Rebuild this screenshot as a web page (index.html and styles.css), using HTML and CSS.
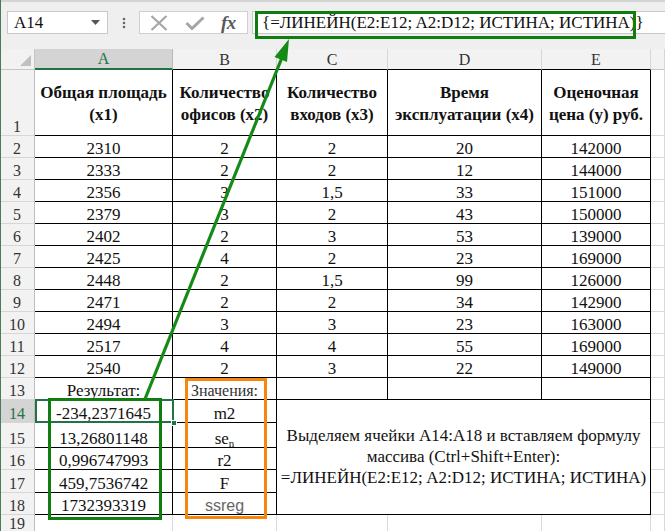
FILE: index.html
```html
<!DOCTYPE html>
<html lang="ru">
<head>
<meta charset="utf-8">
<title>ЛИНЕЙН</title>
<link rel="stylesheet" href="styles.css">
</head>
<body>
<div class="app">
  <div class="fbar">
    <div class="namebox">
      <span class="nb-text">A14</span>
      <svg class="caret" width="9" height="5" viewBox="0 0 9 5"><path d="M0 0h9L4.5 5z" fill="#555"/></svg>
    </div>
    <div class="dots">
      <svg width="4" height="12" viewBox="0 0 4 12"><circle cx="2" cy="2" r="1.3" fill="#666"/><circle cx="2" cy="6" r="1.3" fill="#666"/><circle cx="2" cy="10" r="1.3" fill="#666"/></svg>
    </div>
    <div class="btns">
      <svg class="ic-x" width="18" height="16" viewBox="0 0 18 16"><path d="M1.5 1L16.5 15M16.5 1L1.5 15" stroke="#a6a6a6" stroke-width="2.2" fill="none"/></svg>
      <svg class="ic-ok" width="20" height="14" viewBox="0 0 20 14"><path d="M1.5 7L7 12.5L18.5 1.5" stroke="#a6a6a6" stroke-width="3" fill="none"/></svg>
      <span class="fx">fx</span>
    </div>
    <div class="formula">
      <span class="f-text">{=ЛИНЕЙН(E2:E12; A2:D12; ИСТИНА; ИСТИНА)}</span>
    </div>
  </div>

  <table class="sheet">
    <tr class="hdr">
      <th class="corner w-rh"><span class="tri"></span></th>
      <th class="w-a ch ch-sel">A</th>
      <th class="w-b ch ch-k">B</th>
      <th class="w-c ch ch-k">C</th>
      <th class="w-d ch ch-k">D</th>
      <th class="w-e ch ch-k">E</th>
      <th class="w-f ch"></th>
    </tr>
    <tr class="r-head">
      <th class="rh">1</th>
      <td class="k hd">Общая площадь<br>(x1)</td>
      <td class="k hd">Количество<br>офисов (x2)</td>
      <td class="k hd">Количество<br>входов (x3)</td>
      <td class="k hd">Время<br>эксплуатации (x4)</td>
      <td class="k hd">Оценочная<br>цена (y) руб.</td>
      <td class="g"></td>
    </tr>
    <tr class="r22"><th class="rh">2</th><td class="k">2310</td><td class="k">2</td><td class="k">2</td><td class="k">20</td><td class="k">142000</td><td class="g"></td></tr>
    <tr class="r22"><th class="rh">3</th><td class="k">2333</td><td class="k">2</td><td class="k">2</td><td class="k">12</td><td class="k">144000</td><td class="g"></td></tr>
    <tr class="r22"><th class="rh">4</th><td class="k">2356</td><td class="k">3</td><td class="k">1,5</td><td class="k">33</td><td class="k">151000</td><td class="g"></td></tr>
    <tr class="r22"><th class="rh">5</th><td class="k">2379</td><td class="k">3</td><td class="k">2</td><td class="k">43</td><td class="k">150000</td><td class="g"></td></tr>
    <tr class="r22"><th class="rh">6</th><td class="k">2402</td><td class="k">2</td><td class="k">3</td><td class="k">53</td><td class="k">139000</td><td class="g"></td></tr>
    <tr class="r22"><th class="rh">7</th><td class="k">2425</td><td class="k">4</td><td class="k">2</td><td class="k">23</td><td class="k">169000</td><td class="g"></td></tr>
    <tr class="r22"><th class="rh">8</th><td class="k">2448</td><td class="k">2</td><td class="k">1,5</td><td class="k">99</td><td class="k">126000</td><td class="g"></td></tr>
    <tr class="r22"><th class="rh">9</th><td class="k">2471</td><td class="k">2</td><td class="k">2</td><td class="k">34</td><td class="k">142900</td><td class="g"></td></tr>
    <tr class="r22"><th class="rh">10</th><td class="k">2494</td><td class="k">3</td><td class="k">3</td><td class="k">23</td><td class="k">163000</td><td class="g"></td></tr>
    <tr class="r22"><th class="rh">11</th><td class="k">2517</td><td class="k">4</td><td class="k">4</td><td class="k">55</td><td class="k">169000</td><td class="g"></td></tr>
    <tr class="r22"><th class="rh">12</th><td class="k">2540</td><td class="k">2</td><td class="k">3</td><td class="k">22</td><td class="k">149000</td><td class="g"></td></tr>
    <tr class="r22"><th class="rh">13</th><td class="k">Результат:</td><td class="k lbl">Значения:</td><td class="k"></td><td class="k"></td><td class="k"></td><td class="g"></td></tr>
    <tr class="r23">
      <th class="rh rh-sel">14</th><td class="k">-234,2371645</td><td class="k">m2</td>
      <td class="k note" colspan="3" rowspan="5">Выделяем ячейки A14:A18 и вставляем формулу<br>массива (Ctrl+Shift+Enter):<br>=ЛИНЕЙН(E2:E12; A2:D12; ИСТИНА; ИСТИНА)</td>
      <td class="g"></td>
    </tr>
    <tr class="r25"><th class="rh">15</th><td class="k">13,26801148</td><td class="k">se<sub>n</sub></td><td class="g"></td></tr>
    <tr class="r22"><th class="rh">16</th><td class="k">0,996747993</td><td class="k">r2</td><td class="g"></td></tr>
    <tr class="r23"><th class="rh">17</th><td class="k">459,7536742</td><td class="k">F</td><td class="g"></td></tr>
    <tr class="r22"><th class="rh">18</th><td class="k">1732393319</td><td class="k ss">ssreg</td><td class="g"></td></tr>
    <tr class="r19"><th class="rh">19</th><td class="g"></td><td class="g"></td><td class="g"></td><td class="g"></td><td class="g"></td><td class="g"></td></tr>
  </table>

  <div class="fbox"></div>
  <div class="selbox"><span class="handle"></span></div>
  <div class="ann-green"></div>
  <div class="ann-orange"></div>
  <svg class="arrow" width="665" height="531" viewBox="0 0 665 531">
    <line x1="283" y1="55" x2="145" y2="399" stroke="#168a16" stroke-width="3.2"/>
    <polygon points="289,39 287,62 274.5,57" fill="#168a16"/>
  </svg>
</div>
</body>
</html>
```

FILE: styles.css
```css
* { box-sizing: border-box; }

body {
  margin: 0;
  background: #fff;
  font-family: "Liberation Serif", Tinos, "Times New Roman", "DejaVu Serif", serif;
  color: #111;
}

.app {
  position: relative;
  width: 665px;
  height: 531px;
  overflow: hidden;
}

.app::before {
  content: "";
  position: absolute;
  left: 0;
  top: 0;
  bottom: 0;
  width: 1px;
  background: #4a7a5a;
  z-index: 5;
}

/* formula bar */
.fbar {
  height: 49px;
  background: #efefef;
  border-top: 2px solid #d4d4d4;
  display: flex;
  align-items: flex-start;
  padding-top: 9px;
}

.namebox {
  margin-left: 7px;
  width: 101px;
  height: 23px;
  background: #fff;
  border: 1px solid #c8c8c8;
  display: flex;
  align-items: center;
  padding: 0 7px 0 6px;
}

.nb-text {
  font-size: 17px;
  line-height: 20px;
  flex: 1;
}

.caret { display: block; }

.dots {
  width: 31px;
  height: 23px;
  display: flex;
  align-items: center;
  justify-content: center;
}
.dots svg { display: block; }

.btns {
  width: 109px;
  height: 23px;
  background: #fff;
  border: 1px solid #d0d0d0;
  display: flex;
  align-items: center;
  padding-left: 10px;
}
.ic-x { display: block; margin-right: 17px; }
.ic-ok { display: block; margin-right: 16px; }
.fx {
  font-style: italic;
  font-weight: bold;
  font-size: 19px;
  line-height: 20px;
  color: #5a5a5a;
  letter-spacing: -0.5px;
}

.formula {
  flex: 1;
  margin-left: 4px;
  height: 23px;
  background: #fff;
  border: 1px solid #c8c8c8;
  border-right: none;
  display: flex;
  align-items: center;
  padding-left: 9px;
}
.f-text {
  font-size: 17px;
  line-height: 20px;
  white-space: nowrap;
}

/* sheet */
.sheet {
  border-collapse: separate;
  border-spacing: 0;
  table-layout: fixed;
  width: 665px;
}

:where(.sheet th, .sheet td) {
  padding: 0 2px;
  font-size: 17px;
  line-height: 17px;
  font-weight: normal;
  text-align: center;
  vertical-align: bottom;
  white-space: nowrap;
  overflow: hidden;
}

.w-rh { width: 35px; }
.w-a { width: 138px; }
.w-b { width: 104px; }
.w-c { width: 111px; }
.w-d { width: 154px; }
.w-e { width: 109px; }
.w-f { width: 14px; }

.hdr th { height: 21px; }
.r-head td, .r-head th { height: 66px; }
.r22 td, .r22 th { height: 22px; }
.r23 td, .r23 th { height: 23px; }
.r25 td, .r25 th { height: 25px; }
.r19 td, .r19 th { height: 16px; }

.ch {
  background: #f2f2f2;
  font-size: 16px;
  color: #333;
  vertical-align: middle;
  border-right: 1px solid #d6d6d6;
  border-bottom: 1px solid #c6c6c6;
}
.ch-k { border-bottom-color: #000; }
.ch-sel {
  background: #d4d4d4;
  color: #217346;
  border-bottom: 2px solid #217346;
  border-right-color: #b9b9b9;
}

.corner {
  position: relative;
  background: #f2f2f2;
  border-right: 1px solid #c6c6c6;
  border-bottom: 1px solid #c6c6c6;
}
.tri {
  position: absolute;
  right: 3px;
  bottom: 3px;
  width: 0;
  height: 0;
  border-left: 11px solid transparent;
  border-bottom: 11px solid #c0c0c0;
}

.rh {
  background: #f2f2f2;
  font-size: 16px;
  color: #333;
  border-right: 1px solid #bdbdbd;
  border-bottom: 1px solid #d6d6d6;
}
.rh-sel {
  background: #d4d4d4;
  color: #217346;
}

.k {
  border-right: 1px solid #000;
  border-bottom: 1px solid #000;
}
.g {
  border-right: 1px solid #dadada;
  border-bottom: 1px solid #dadada;
}

.hd {
  font-weight: bold;
  line-height: 22px;
  vertical-align: middle;
  padding-top: 3px;
}

.lbl {
  font-size: 16px;
  color: #333;
}
.ss {
  font-family: "Liberation Sans", Arial, sans-serif;
  font-size: 16px;
  color: #666;
}
sub {
  font-size: 11px;
  line-height: 0;
  vertical-align: -3px;
}

.note {
  vertical-align: middle;
  line-height: 21px;
  padding-bottom: 2px;
}

/* overlays */
.fbox {
  position: absolute;
  left: 255px;
  top: 11px;
  width: 381px;
  height: 28px;
  border: 3px solid #0f7d0f;
}
.selbox {
  position: absolute;
  left: 35px;
  top: 399px;
  width: 139px;
  height: 24px;
  border: 2px solid #217346;
}
.handle {
  position: absolute;
  right: -5px;
  bottom: -5px;
  width: 6px;
  height: 6px;
  background: #217346;
  border: 1px solid #fff;
}
.ann-green {
  position: absolute;
  left: 48px;
  top: 398px;
  width: 114px;
  height: 122px;
  border: 3px solid #0f7d0f;
}
.ann-orange {
  position: absolute;
  left: 185px;
  top: 378px;
  width: 82px;
  height: 141px;
  border: 3px solid #f7860f;
}
.arrow {
  position: absolute;
  left: 0;
  top: 0;
  pointer-events: none;
}
```
